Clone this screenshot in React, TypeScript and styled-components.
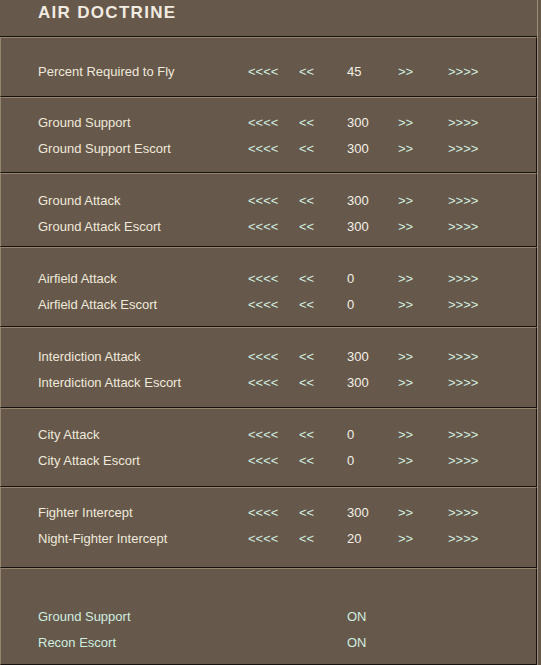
import React from "react";
import styled, { createGlobalStyle } from "styled-components";

const GlobalStyle = createGlobalStyle`
  html, body {
    margin: 0;
    padding: 0;
    background: #66584a;
  }
  body {
    font-family: "Liberation Sans", Arial, sans-serif;
  }
`;

const Frame = styled.div`
  width: 538px;
  height: 665px;
  display: flex;
  flex-direction: column;
  box-sizing: border-box;
  border-right: 1px solid #9c8c78;
  background: #66584a;
  overflow: hidden;
`;

const Header = styled.div`
  height: 37px;
  box-sizing: border-box;
  border-bottom: 1px solid #17120d;
  width: 537px;
  padding-left: 38px;
  display: flex;
  align-items: flex-start;
`;

const Title = styled.h1`
  margin: 0;
  margin-top: 2px;
  font-size: 17px;
  line-height: 22px;
  font-weight: bold;
  letter-spacing: 1.3px;
  color: #f1ebe1;
`;

const Section = styled.section<{ $h?: number; $pad: number }>`
  box-sizing: border-box;
  width: 537px;
  height: ${(p) => (p.$h ? `${p.$h}px` : "auto")};
  flex: ${(p) => (p.$h ? "none" : "1")};
  padding-top: ${(p) => p.$pad}px;
  border-top: 1px solid #95846f;
  border-left: 1px solid #95846f;
  border-bottom: 1px solid #17120d;
  border-right: 1px solid #17120d;
`;

const Row = styled.div`
  display: grid;
  grid-template-columns: 210px 51px 48px 51px 50px auto;
  padding-left: 37px;
  height: 26px;
  line-height: 26px;
  font-size: 13px;
`;

const Label = styled.span<{ $toggle?: boolean }>`
  color: ${(p) => (p.$toggle ? "#cfeee0" : "#efe9dc")};
  white-space: nowrap;
`;

const Arrow = styled.span`
  color: #d2efe0;
`;

const Value = styled.span<{ $toggle?: boolean }>`
  color: ${(p) => (p.$toggle ? "#cfeee0" : "#f3f0e8")};
`;

type Item = { label: string; value: number };

const groups: { h: number; pad: number; items: Item[] }[] = [
  { h: 60, pad: 21, items: [{ label: "Percent Required to Fly", value: 45 }] },
  {
    h: 76,
    pad: 12,
    items: [
      { label: "Ground Support", value: 300 },
      { label: "Ground Support Escort", value: 300 },
    ],
  },
  {
    h: 74,
    pad: 14,
    items: [
      { label: "Ground Attack", value: 300 },
      { label: "Ground Attack Escort", value: 300 },
    ],
  },
  {
    h: 80,
    pad: 18,
    items: [
      { label: "Airfield Attack", value: 0 },
      { label: "Airfield Attack Escort", value: 0 },
    ],
  },
  {
    h: 81,
    pad: 16,
    items: [
      { label: "Interdiction Attack", value: 300 },
      { label: "Interdiction Attack Escort", value: 300 },
    ],
  },
  {
    h: 79,
    pad: 13,
    items: [
      { label: "City Attack", value: 0 },
      { label: "City Attack Escort", value: 0 },
    ],
  },
  {
    h: 81,
    pad: 12,
    items: [
      { label: "Fighter Intercept", value: 300 },
      { label: "Night-Fighter Intercept", value: 20 },
    ],
  },
];

const toggles = ["Ground Support", "Recon Escort"];

function SettingRow({ label, value }: Item) {
  return (
    <Row>
      <Label>{label}</Label>
      <Arrow>&lt;&lt;&lt;&lt;</Arrow>
      <Arrow>&lt;&lt;</Arrow>
      <Value>{value}</Value>
      <Arrow>&gt;&gt;</Arrow>
      <Arrow>&gt;&gt;&gt;&gt;</Arrow>
    </Row>
  );
}

export default function App() {
  return (
    <>
      <GlobalStyle />
      <Frame>
        <Header>
          <Title>AIR DOCTRINE</Title>
        </Header>
        {groups.map((g, i) => (
          <Section key={i} $h={g.h} $pad={g.pad}>
            {g.items.map((it) => (
              <SettingRow key={it.label} {...it} />
            ))}
          </Section>
        ))}
        <Section $pad={35}>
          {toggles.map((t) => (
            <Row key={t}>
              <Label $toggle>{t}</Label>
              <span />
              <span />
              <Value $toggle>ON</Value>
            </Row>
          ))}
        </Section>
      </Frame>
    </>
  );
}
